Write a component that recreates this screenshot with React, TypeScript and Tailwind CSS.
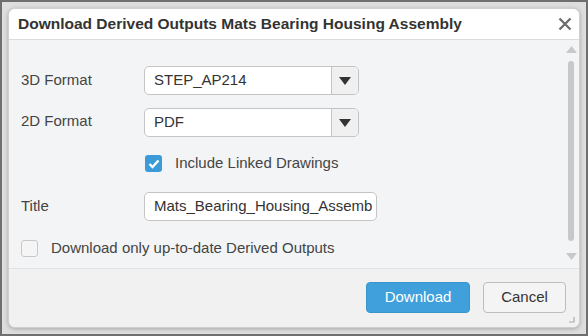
import React from "react";

function Select({ value }: { value: string }) {
  return (
    <div className="flex h-[29px] w-[215px] rounded-[5px] border border-[#c4c4c4] bg-white overflow-hidden">
      <div className="flex-1 flex items-center pl-[9px] text-[15px] text-[#333]">{value}</div>
      <div className="w-[27px] border-l border-[#c4c4c4] bg-[#f0f0f0] flex items-center justify-center">
        <svg width="12" height="8" viewBox="0 0 12 8"><path d="M0 0 L12 0 L6 8 Z" fill="#333" /></svg>
      </div>
    </div>
  );
}

export default function App() {
  return (
    <div className="w-[588px] h-[336px] bg-[#6f6f6f] p-[2px] font-['Liberation_Sans',Arial,sans-serif]">
      <div className="w-full h-full bg-[#dedede] p-[6px]">
        <div className="w-[572px] h-[320px] rounded-[7px] border border-[#cfcfcf] bg-[#f3f4f6] shadow-[0_1px_4px_rgba(0,0,0,0.25)] flex flex-col overflow-hidden">
          <div className="h-[31px] shrink-0 bg-white border-b border-[#dcdcdc] flex items-center pl-[9px] pr-[7px]">
            <div className="flex-1 text-[15.5px] font-bold text-[#333] whitespace-nowrap">Download Derived Outputs Mats Bearing Housing Assembly</div>
            <svg width="14" height="14" viewBox="0 0 14 14"><path d="M1.5 1.5 L12.5 12.5 M12.5 1.5 L1.5 12.5" stroke="#6b6b6b" strokeWidth="2.3" /></svg>
          </div>
          <div className="flex-1 flex border-b border-[#e2e2e2]">
            <div className="flex-1 pl-[12px] pt-[26px] text-[15px] text-[#444]">
              <div className="flex items-center h-[29px]">
                <div className="w-[123px]">3D Format</div>
                <Select value="STEP_AP214" />
              </div>
              <div className="flex items-center h-[29px] mt-[13px]">
                <div className="w-[123px] -mt-[3px]">2D Format</div>
                <Select value="PDF" />
              </div>
              <div className="flex items-center h-[17px] mt-[18px] pl-[124px]">
                <div className="w-[17px] h-[17px] rounded-[3px] bg-[#3d9ad8] flex items-center justify-center">
                  <svg width="12" height="10" viewBox="0 0 12 10"><path d="M1.5 5 L4.5 8 L10.5 1.5" stroke="white" strokeWidth="2.4" fill="none" /></svg>
                </div>
                <div className="ml-[13px]">Include Linked Drawings</div>
              </div>
              <div className="flex items-center h-[29px] mt-[20px]">
                <div className="w-[123px]">Title</div>
                <div className="w-[233px] h-[29px] rounded-[5px] border border-[#c4c4c4] bg-white flex items-center pl-[9px] whitespace-nowrap text-[#333]">
                  Mats_Bearing_Housing_Assemb
                </div>
              </div>
              <div className="flex items-center h-[17px] mt-[19px]">
                <div className="w-[17px] h-[17px] rounded-[3px] border border-[#c8c8c8] bg-[#f5f5f5]" />
                <div className="ml-[13px]">Download only up-to-date Derived Outputs</div>
              </div>
            </div>
            <div className="w-[12px] flex flex-col items-center pt-[6px] pb-[8px] mr-[2px]">
              <svg width="11" height="7" viewBox="0 0 11 7"><path d="M0 7 L11 7 L5.5 0 Z" fill="#c9c9c9" /></svg>
              <div className="w-[6px] flex-1 mt-[8px] mb-[12px] rounded-full bg-[#c8c8c8]" />
              <svg width="11" height="7" viewBox="0 0 11 7"><path d="M0 0 L11 0 L5.5 7 Z" fill="#c9c9c9" /></svg>
            </div>
          </div>
          <div className="h-[58px] shrink-0 bg-[#f1f1f1] flex items-start justify-end pt-[13px] pr-[13px] relative">
            <div className="w-[104px] h-[31px] shrink-0 rounded-[4px] bg-[#3fa0dc] border border-[#3a94cc] text-white text-[15px] flex items-center justify-center">Download</div>
            <div className="w-[83px] h-[31px] shrink-0 ml-[13px] rounded-[4px] border border-[#bdbdbd] bg-[#f4f4f4] text-[#333] text-[15px] flex items-center justify-center">Cancel</div>
            <svg width="6" height="6" viewBox="0 0 6 6" className="absolute right-[4px] bottom-[4px]"><path d="M5 0 L5 5 L0 5" stroke="#aaa" strokeWidth="1.2" fill="none" /></svg>
          </div>
        </div>
      </div>
    </div>
  );
}
